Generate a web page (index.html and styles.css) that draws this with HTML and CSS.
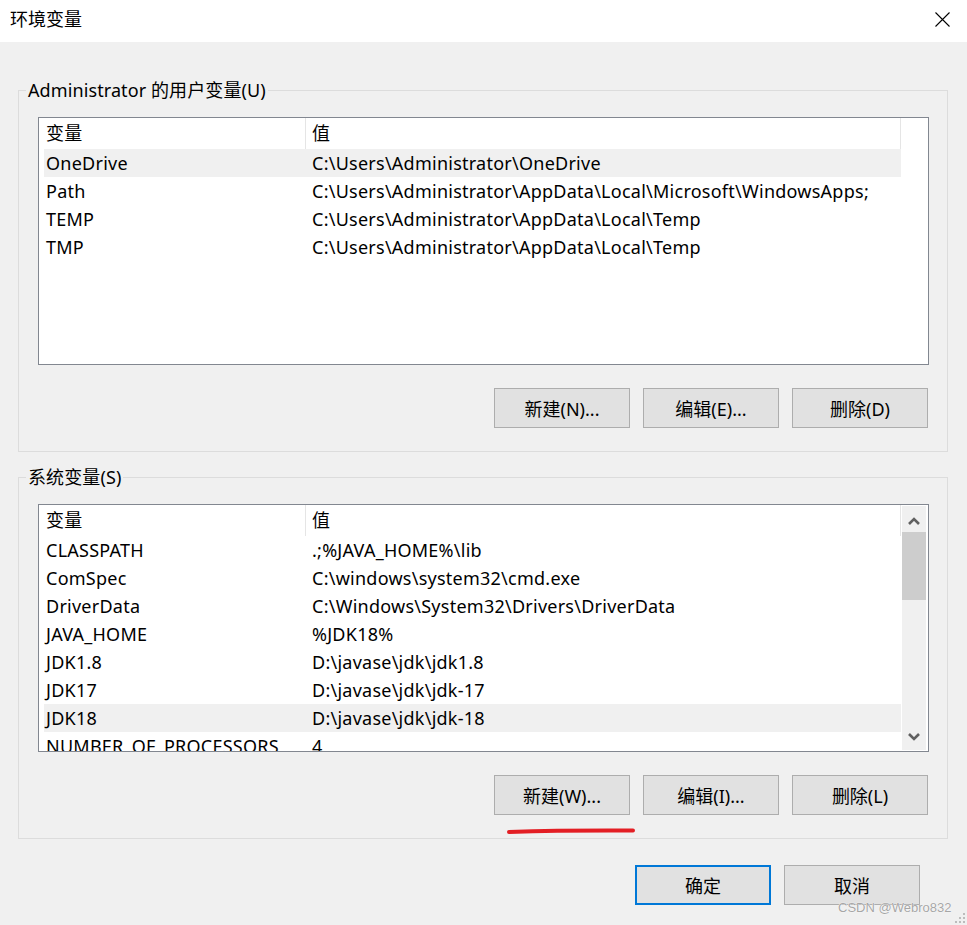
FILE: index.html
```html
<!DOCTYPE html>
<html lang="zh-CN">
<head>
    <meta charset="UTF-8">
    <meta name="viewport" content="width=device-width, initial-scale=1.0">
    <title>环境变量</title>
    <link rel="stylesheet" href="styles.css">
</head>
<body>
<div class="dialog">
  <div class="titlebar">
    <span class="title">环境变量</span>
    <svg class="close" width="15" height="15" viewBox="0 0 15 15">
      <path d="M0.5 0.5 L14.5 14.5 M14.5 0.5 L0.5 14.5" stroke="#000" stroke-width="1.1" fill="none"/>
    </svg>
  </div>

  <div class="content">
    <!-- user variables -->
    <fieldset class="group">
      <legend>Administrator 的用户变量(U)</legend>
      <div class="group-body">
        <div class="list">
          <div class="rows">
            <div class="row head"><span class="name">变量</span><span class="value">值</span></div>
            <div class="row selected"><span class="name">OneDrive</span><span class="value">C:\Users\Administrator\OneDrive</span></div>
            <div class="row"><span class="name">Path</span><span class="value">C:\Users\Administrator\AppData\Local\Microsoft\WindowsApps;</span></div>
            <div class="row"><span class="name">TEMP</span><span class="value">C:\Users\Administrator\AppData\Local\Temp</span></div>
            <div class="row"><span class="name">TMP</span><span class="value">C:\Users\Administrator\AppData\Local\Temp</span></div>
          </div>
        </div>
        <div class="buttons">
          <button class="btn">新建(N)...</button>
          <button class="btn">编辑(E)...</button>
          <button class="btn">删除(D)</button>
        </div>
      </div>
    </fieldset>

    <!-- system variables -->
    <fieldset class="group second">
      <legend>系统变量(S)</legend>
      <div class="group-body">
        <div class="list">
          <div class="rows">
            <div class="row head"><span class="name">变量</span><span class="value">值</span></div>
            <div class="row"><span class="name">CLASSPATH</span><span class="value">.;%JAVA_HOME%\lib</span></div>
            <div class="row"><span class="name">ComSpec</span><span class="value">C:\windows\system32\cmd.exe</span></div>
            <div class="row"><span class="name">DriverData</span><span class="value">C:\Windows\System32\Drivers\DriverData</span></div>
            <div class="row"><span class="name">JAVA_HOME</span><span class="value">%JDK18%</span></div>
            <div class="row"><span class="name">JDK1.8</span><span class="value">D:\javase\jdk\jdk1.8</span></div>
            <div class="row"><span class="name">JDK17</span><span class="value">D:\javase\jdk\jdk-17</span></div>
            <div class="row selected"><span class="name">JDK18</span><span class="value">D:\javase\jdk\jdk-18</span></div>
            <div class="row"><span class="name">NUMBER_OF_PROCESSORS</span><span class="value">4</span></div>
          </div>
          <div class="scrollbar">
            <div class="arrow up">
              <svg width="12" height="8" viewBox="0 0 12 8"><polyline points="1,7 6,2 11,7" fill="none" stroke="#606060" stroke-width="2.6"/></svg>
            </div>
            <div class="thumb"></div>
            <div class="track"></div>
            <div class="arrow down">
              <svg width="12" height="8" viewBox="0 0 12 8"><polyline points="1,1 6,6 11,1" fill="none" stroke="#606060" stroke-width="2.6"/></svg>
            </div>
          </div>
        </div>
        <div class="buttons">
          <button class="btn">新建(W)...</button>
          <button class="btn">编辑(I)...</button>
          <button class="btn">删除(L)</button>
        </div>
      </div>
    </fieldset>

    <div class="footer">
      <button class="btn default">确定</button>
      <button class="btn">取消</button>
    </div>
  </div>

  <!-- hand drawn mark under the new button -->
  <svg class="mark" width="130" height="8" viewBox="0 0 130 8">
    <path d="M3 5 Q60 3.2 127 3.6" stroke="#e31e24" stroke-width="4" stroke-linecap="round" fill="none"/>
  </svg>

  <span class="watermark">CSDN @Webro832</span>
  <svg class="grip" width="12" height="12" viewBox="0 0 12 12">
    <rect x="9" y="1" width="2" height="2" fill="#bcbcbc"/>
    <rect x="5" y="5" width="2" height="2" fill="#bcbcbc"/>
    <rect x="9" y="5" width="2" height="2" fill="#bcbcbc"/>
    <rect x="1" y="9" width="2" height="2" fill="#bcbcbc"/>
    <rect x="5" y="9" width="2" height="2" fill="#bcbcbc"/>
    <rect x="9" y="9" width="2" height="2" fill="#bcbcbc"/>
  </svg>
</div>
</body>
</html>
```

FILE: styles.css
```css
body {
    margin: 0;
    font-family: "Noto Sans", "Noto Sans CJK SC", sans-serif;
    font-size: 18px;
    color: #000;
    background: #f0f0f0;
}

.dialog {
    position: relative;
    width: 967px;
    height: 925px;
    overflow: hidden;
    background: #f0f0f0;
}

.titlebar {
    height: 42px;
    background: #fff;
    display: flex;
    justify-content: space-between;
    align-items: flex-start;
    padding: 0 17px 0 10px;
    box-sizing: border-box;
}
.title {
    line-height: 24px;
    padding-top: 7px;
}
.close {
    margin-top: 12px;
}

.content {
    padding: 36px 19px 0 18px;
}

.group {
    margin: 0;
    padding: 0;
    border: 1px solid #dcdcdc;
    min-width: 0;
}
.group legend {
    margin-left: 7px;
    padding: 0 2px;
    line-height: 24px;
    letter-spacing: 0.1px;
}
.group.second {
    margin-top: 13px;
}
.group-body {
    padding: 15px 18px 23px 19px;
}

.list {
    height: 248px;
    box-sizing: border-box;
    border: 1px solid #828790;
    background: #fff;
    display: flex;
    padding-left: 5px;
}
.rows {
    width: 857px;
    overflow: hidden;
}
.row {
    display: flex;
    height: 28px;
    line-height: 28px;
    white-space: nowrap;
    letter-spacing: 0.25px;
}
.row.head {
    height: 31px;
    line-height: 31px;
}
.row.selected {
    background: #f0f0f0;
}
.name {
    width: 262px;
    flex: none;
    box-sizing: border-box;
    padding-left: 2px;
}
.value {
    flex: 1;
    padding-left: 6px;
}
.head .name,
.head .value {
    border-right: 1px solid #e5e5e5;
}

.scrollbar {
    width: 24px;
    margin: 1px 0 1px 1px;
    background: #f0f0f0;
    display: flex;
    flex-direction: column;
}
.arrow {
    height: 26px;
    display: flex;
    justify-content: center;
    align-items: center;
}
.arrow.up {
    padding-top: 3px;
    box-sizing: border-box;
}
.thumb {
    height: 68px;
    background: #cdcdcd;
}
.track {
    flex: 1;
}

.buttons {
    display: flex;
    justify-content: flex-end;
    gap: 13px;
    margin-top: 23px;
    padding-right: 1px;
}
.btn {
    width: 136px;
    height: 40px;
    padding: 0;
    border: 1px solid #adadad;
    background: #e1e1e1;
    font-family: inherit;
    font-size: 18px;
    color: #000;
}
.btn.default {
    border: 2px solid #0078d7;
}

.footer {
    display: flex;
    justify-content: flex-end;
    gap: 13px;
    margin-top: 26px;
    padding-right: 28px;
}

.mark {
    position: absolute;
    left: 506px;
    top: 827px;
}

.watermark {
    position: absolute;
    left: 838px;
    top: 900px;
    font-family: "Liberation Sans", Arial, sans-serif;
    font-size: 13px;
    color: #a6a6a6;
    text-shadow: 0 0 1px #fff, 0 0 1px #fff;
}

.grip {
    position: absolute;
    right: 1px;
    bottom: 1px;
}
```
